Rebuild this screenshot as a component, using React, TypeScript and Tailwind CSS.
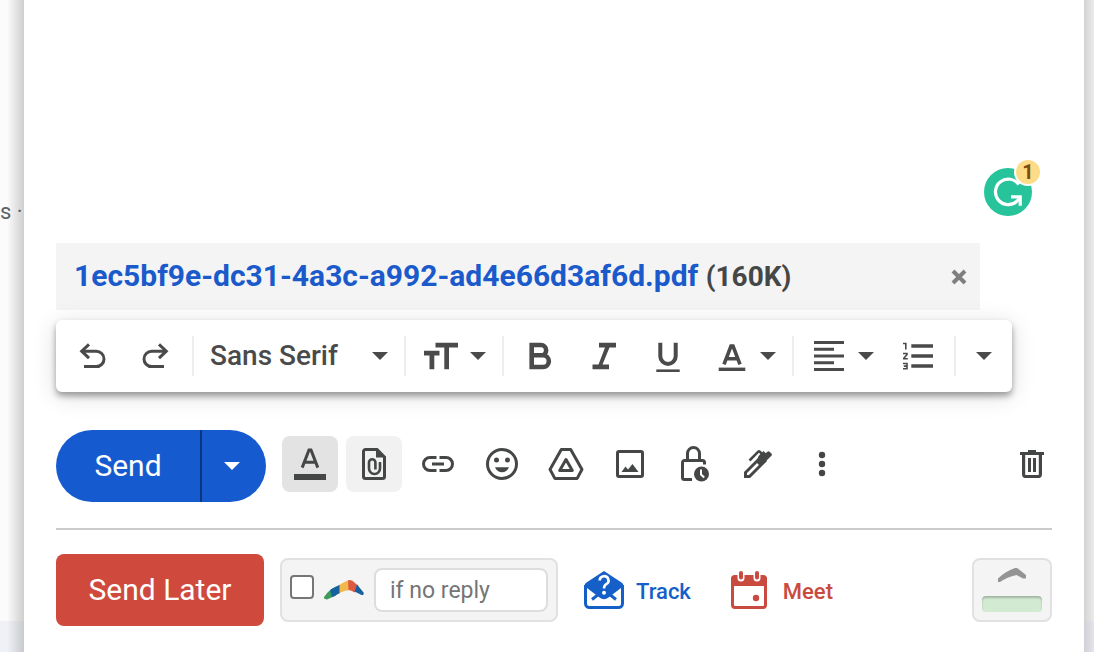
import React from 'react';

interface IconButtonProps {
  label: string;
  className?: string;
  children: React.ReactNode;
}

// Square button of the action row
const IconButton: React.FC<IconButtonProps> = ({ label, className = '', children }) => (
  <button
    type="button"
    aria-label={label}
    className={`flex h-14 w-14 shrink-0 items-center justify-center rounded-lg text-[#444746] ${className}`}
  >
    {children}
  </button>
);

const ToolButton: React.FC<IconButtonProps> = ({ label, className = 'w-16 justify-center', children }) => (
  <button type="button" aria-label={label} className={`flex h-full shrink-0 items-center ${className}`}>
    {children}
  </button>
);

const Divider = ({ className = '' }: { className?: string }) => (
  <span className={`h-10 w-0.5 shrink-0 bg-[#eceeef] ${className}`} />
);

const Caret = () => (
  <svg width="16" height="8" viewBox="0 0 16 8" fill="currentColor" aria-hidden="true">
    <path d="M0 0h16L8 8z" />
  </svg>
);

interface GlyphProps {
  w?: number;
  h?: number;
  stroke?: number;
  children: React.ReactNode;
}

const Glyph: React.FC<GlyphProps> = ({ w = 32, h = 32, stroke = 3, children }) => (
  <svg
    width={w}
    height={h}
    viewBox={`0 0 ${w} ${h}`}
    fill="none"
    stroke="currentColor"
    strokeWidth={stroke}
    className="shrink-0"
    aria-hidden="true"
  >
    {children}
  </svg>
);

const GrammarBadge = () => (
  <button type="button" aria-label="1 writing suggestion" className="relative h-12 w-12 rounded-full bg-[#27c39b]">
    <svg width="48" height="48" viewBox="0 0 48 48" fill="none" stroke="#fff" strokeWidth="3.2" aria-hidden="true">
      <path d="M34.8 16.6A12.8 12.8 0 1 0 33 33.2L36 29.5" />
      <path d="M27 28.8h9.2v9" />
    </svg>
    <span className="absolute -top-2 -right-2 flex h-6 w-6 items-center justify-center rounded-full bg-[#fddb87] text-xl leading-6 font-bold text-[#7d4c0c] ring-2 ring-white">
      1
    </span>
  </button>
);

const Attachment = () => (
  <div className="mr-10 flex h-[67px] items-center justify-between bg-[#f4f4f4] pr-3 pl-[18px]">
    <p className="text-[30px] leading-8 font-bold whitespace-nowrap text-[#444746]">
      <a href="#attachment" className="text-[#1a5acb]">
        1ec5bf9e-dc31-4a3c-a992-ad4e66d3af6d.pdf
      </a>{' '}
      <span className="text-[28px]">(160K)</span>
    </p>
    <button type="button" aria-label="Remove attachment" className="text-[#7f7f7f]">
      <Glyph w={18} h={18} stroke={4}>
        <path d="M3 3l12 12M15 3L3 15" />
      </Glyph>
    </button>
  </div>
);

const FormatToolbar = () => (
  <div
    role="toolbar"
    aria-label="Formatting options"
    className="mt-2.5 mr-2 flex h-[72px] items-center rounded-md bg-white pl-1 text-[#4a4a4a] shadow-[0_4px_6px_rgba(0,0,0,0.35),0_4px_24px_rgba(0,0,0,0.14)]"
  >
    <ToolButton label="Undo">
      <Glyph>
        <path d="M13 4.3L5.7 11.2l7.3 7" />
        <path d="M5.7 11.2h14.6a7.6 7.6 0 0 1 0 15.4H8" />
      </Glyph>
    </ToolButton>
    <ToolButton label="Redo">
      <Glyph>
        <path d="M19 4.3l7.3 6.9-7.3 7" />
        <path d="M26.3 11.2H11.7a7.6 7.6 0 0 0 0 15.4H24" />
      </Glyph>
    </ToolButton>
    <Divider className="ml-1" />
    <button type="button" className="flex h-full w-[210px] shrink-0 items-center justify-between px-4 text-[28px] leading-8 font-medium">
      Sans Serif
      <Caret />
    </button>
    <Divider />
    <ToolButton label="Size" className="w-24 justify-between pr-4 pl-[18px]">
      <Glyph w={34}>
        <path d="M11.5 2.7H34v4.8h-9v21.8h-4.7V7.5h-8.8z" fill="currentColor" stroke="none" />
        <path d="M0 10.7h15.5v4.8h-5.2v13.8H5.500V15.500H0z" fill="currentColor" stroke="none" />
      </Glyph>
      <Caret />
    </ToolButton>
    <Divider className="mr-1" />
    <ToolButton label="Bold">
      <Glyph stroke={4.6}>
        <path d="M7.700 5h9.300a5 5 0 0 1 0 10.300H7.700M7.700 15.300H19a5.800 5.800 0 0 1 0 11.700H7.700V2.700" />
      </Glyph>
    </ToolButton>
    <ToolButton label="Italic">
      <Glyph>
        <path d="M11 2.7h17v4.8h-6.5l-7 17H21v4.8H4.500v-4.800h6l6.500-17h-6z" fill="currentColor" stroke="none" />
      </Glyph>
    </ToolButton>
    <ToolButton label="Underline">
      <Glyph stroke={4}>
        <path d="M8.3 2.7v13.500a7.700 7.700 0 0 0 15.400 0V2.700" />
        <path d="M4.3 31h23.400" strokeWidth="3.2" />
      </Glyph>
    </ToolButton>
    <ToolButton label="Text color" className="w-[92px] justify-between pr-4 pl-[18px]">
      <Glyph w={28} stroke={3.6}>
        <path d="M6 24.3L13 6h2l7 18.300M9 18.800h10" />
        <path d="M.7 29.3h26.600" strokeWidth="3.4" />
      </Glyph>
      <Caret />
    </ToolButton>
    <Divider />
    <ToolButton label="Align" className="w-[92px] justify-between pr-3 pl-5">
      <Glyph w={30}>
        <path d="M0 2.5h30M0 9.300h20M0 16h30M0 22.700h20M0 29.500h30" />
      </Glyph>
      <Caret />
    </ToolButton>
    <ToolButton label="Numbered list">
      <Glyph w={30}>
        <path d="M8.3 6H30M8.300 16H30M8.300 26H30" strokeWidth="3.6" />
        <path d="M0 3.5h2.800v6M0 13.500h4v1L.8 18.300v.4h4M0 23.500h4v5.300H0M.8 26.100H4" strokeWidth="1.6" />
      </Glyph>
    </ToolButton>
    <Divider className="ml-1" />
    <ToolButton label="More formatting options" className="w-14 justify-center">
      <Caret />
    </ToolButton>
  </div>
);

const ActionRow = () => (
  <div className="flex pt-[38px] pr-6 pl-8">
    <div className="mr-4 flex h-[72px] shrink-0 overflow-hidden rounded-full bg-[#155bcf] text-white">
      <button type="button" className="w-36 text-[30px] leading-8">
        Send
      </button>
      <span className="w-0.5 bg-[#0b367f]" />
      <button type="button" aria-label="More send options" className="flex w-16 items-center pl-[22px]">
        <Caret />
      </button>
    </div>

    <div className="flex flex-1 gap-2 pt-1.5">
      <IconButton label="Formatting options" className="bg-[#e3e3e3]">
        <Glyph>
          <path d="M8.2 19.600L15 2h2l6.800 17.600M11 14.300h10" />
          <path d="M0 29h32" strokeWidth="6" />
        </Glyph>
      </IconButton>
      <IconButton label="Attach files" className="bg-[#f1f1f1]">
        <Glyph>
          <path d="M19 1.5H7.500a2 2 0 0 0-2 2v25a2 2 0 0 0 2 2h17a2 2 0 0 0 2-2V9z" />
          <path d="M18 0l10 9.500H18z" fill="currentColor" stroke="none" />
          <path d="M22 14v6.500a5.500 5.500 0 0 1-11 0v-6a3.200 3.200 0 0 1 6.400 0v7" strokeWidth="2.6" />
        </Glyph>
      </IconButton>
      <IconButton label="Insert link">
        <Glyph>
          <path d="M14.5 9.500H8a6.500 6.500 0 0 0 0 13h6.500M17.500 9.500H24a6.500 6.500 0 0 1 0 13h-6.500M10 16h12" />
        </Glyph>
      </IconButton>
      <IconButton label="Insert emoji">
        <Glyph>
          <circle cx="16" cy="16" r="14.5" />
          <g fill="currentColor" stroke="none">
            <circle cx="10.5" cy="12" r="2.5" />
            <circle cx="21.5" cy="12" r="2.5" />
            <path d="M9 19.300h14c-1.400 3.400-3.900 5-7 5s-5.600-1.600-7-5z" />
          </g>
        </Glyph>
      </IconButton>
      <IconButton label="Insert files using Drive">
        <Glyph w={36}>
          <path d="M13.300 1.600h9.400L34 21.400l-4.800 9H6.800L2 21.400z" strokeLinejoin="round" />
          <path d="M18 11.500l6.300 11H11.700z" strokeLinejoin="round" />
        </Glyph>
      </IconButton>
      <IconButton label="Insert photo">
        <Glyph w={28} h={28}>
          <rect x="1.5" y="1.5" width="25" height="25" rx="1.5" />
          <path d="M5.500 22l4-5.500 2.500 3 4.500-5.500 6 8z" fill="currentColor" stroke="none" />
        </Glyph>
      </IconButton>
      <IconButton label="Toggle confidential mode">
        <Glyph w={30} h={38}>
          <path d="M13 34.500H5.500a2 2 0 0 1-2-2v-15a2 2 0 0 1 2-2h18a2 2 0 0 1 2 2v2" />
          <path d="M8.500 15.500V8.500a6 6 0 0 1 12 0v7" />
          <circle cx="22.5" cy="29" r="7.5" fill="currentColor" stroke="none" />
          <path d="M22 24.500v5l3.200 3" stroke="#fff" strokeWidth="2" />
        </Glyph>
      </IconButton>
      <IconButton label="Insert signature">
        <Glyph w={28} h={28}>
          <path d="M1.500 26.500v-4L17 7l4 4L5.500 26.500z" strokeWidth="3" />
          <path d="M14.500 6L19.500 1l2.300 2.200 1.500-1.500q1.200-1 2.300 0l1.800 1.800q1 1.200 0 2.300L16.500 16.500l-4-4z" fill="currentColor" stroke="none" />
          <path d="M5.500 10.500l8.800-8.800q.7-.7 1.400 0l3.300 3.300" strokeWidth="2.6" />
        </Glyph>
      </IconButton>
      <IconButton label="More options">
        <Glyph>
          <g fill="currentColor" stroke="none">
            <circle cx="16" cy="7" r="3.2" />
            <circle cx="16" cy="16" r="3.2" />
            <circle cx="16" cy="25" r="3.2" />
          </g>
        </Glyph>
      </IconButton>
      <IconButton label="Discard draft" className="ml-auto">
        <Glyph w={24} h={28}>
          <path d="M0 3.500h24" />
          <path d="M8 1h8" strokeWidth="2" />
          <path d="M3.600 4v20.500a2 2 0 0 0 2 2h12.800a2 2 0 0 0 2-2V4" strokeWidth="3.2" />
          <path d="M9.500 8v14M14.500 8v14" />
        </Glyph>
      </IconButton>
    </div>
  </div>
);

const Boomerang = () => (
  <svg width="40" height="20" viewBox="0 0 40 20" aria-hidden="true">
    <path d="M0 17Q3.500 11.500 9 8l3 7.500L3 19.500Q-.5 19.500 0 17z" fill="#3f9b5a" />
    <path d="M6 10Q10 7 16 4.700V13L8 17.300z" fill="#15609f" />
    <path d="M15.500 5Q19 2.500 24.500 0l1 10q-5 .5-10 3z" fill="#f3b84b" />
    <path d="M24 .5Q27.500-1 31 3l3.500 3-4 6.500Q27.500 10 24.500 10z" fill="#dd5a41" />
    <path d="M33 4.500l6.500 8q1 3-2 2.500L30.500 11.500z" fill="#15609f" />
  </svg>
);

const BoomerangRow = () => (
  <div className="flex items-center px-8 pt-6 pb-[26px]">
    <button type="button" className="h-[72px] w-52 shrink-0 rounded-lg bg-[#cf4a3c] text-[30px] leading-8 text-white">
      Send Later
    </button>

    <div className="ml-4 flex h-16 shrink-0 items-center rounded-lg border-2 border-[#e1e1e1] bg-[#f4f4f4] px-2">
      <label className="flex items-center gap-2.5">
        <input
          type="checkbox"
          aria-label="Boomerang this message"
          className="mb-1.5 h-6 w-6 appearance-none rounded border-2 border-[#767676] bg-white"
        />
        <Boomerang />
      </label>
      <input
        type="text"
        aria-label="Boomerang condition"
        placeholder="if no reply"
        className="ml-2.5 h-11 w-[174px] rounded-lg border-2 border-[#dddddd] bg-white px-3.5 text-[23px] leading-8 placeholder:text-[#757575]"
      />
    </div>

    <a href="#track" className="ml-[26px] flex shrink-0 items-center gap-3 text-[22px] leading-8 font-medium text-[#155fc8]">
      <Glyph w={40} h={38}>
        <path d="M20 0l17.500 11.500q2.500 1.700 1.500 4L24.500 26.500q-4.500 3.500-9 0L1 15.500q-1-2.300 1.500-4z" fill="currentColor" stroke="none" />
        <path d="M1.500 14v18.500a4 4 0 0 0 4 4h29a4 4 0 0 0 4-4V14" />
        <path d="M8 28.500l7.500-6M32 28.500l-7.500-6" />
        <path d="M15.700 9.500a4.400 4.300 0 1 1 6.600 3.700Q20 14.500 20 17.500" stroke="#fff" strokeWidth="2.6" />
        <circle cx="20" cy="21.8" r="2" fill="#fff" stroke="none" />
      </Glyph>
      <span className="pt-1">Track</span>
    </a>
    <a href="#meet" className="ml-10 flex shrink-0 items-center gap-4 text-[22px] leading-8 font-medium text-[#c94a3e]">
      <Glyph w={36} h={38}>
        <path d="M4 4h28a4 4 0 0 1 4 4v7H0V8a4 4 0 0 1 4-4z" fill="currentColor" stroke="none" />
        <rect x="1.5" y="6" width="33" height="30.5" rx="2.5" />
        <path d="M10 2v5M26 2v5" stroke="#fff" strokeWidth="7" strokeLinecap="round" />
        <path d="M10 2v4.500M26 2v4.500" strokeWidth="4" strokeLinecap="round" />
        <circle cx="25" cy="27" r="3.2" fill="currentColor" stroke="none" />
      </Glyph>
      <span className="pt-1">Meet</span>
    </a>

    <button
      type="button"
      aria-label="Boomerang status"
      className="ml-auto flex h-16 w-20 shrink-0 flex-col items-center justify-between rounded-lg border-2 border-[#e1e1e1] bg-[#f4f4f4] p-2"
    >
      <svg width="28" height="14" viewBox="0 0 28 14" fill="#949494" aria-hidden="true">
        <path d="M0 10.500Q7 3.500 17 0q2-.5 3.500 1L28 7v3.500h-3L18.500 7Q9 9 2 14H0z" />
      </svg>
      <span className="h-4 w-full rounded bg-[#d2ead1] shadow-[inset_0_2px_2px_rgba(0,0,0,0.22)]" />
    </button>
  </div>
);

const App: React.FC = () => (
  <div className="flex min-h-screen bg-[#e9e9e9] font-['Roboto',sans-serif]">
    {/* Edge of the inbox behind the compose window */}
    <aside className="flex w-6 shrink-0 flex-col bg-linear-to-r from-[#fbfbfb] from-30% to-[#cfcfcf]">
      <p className="h-[621px] pt-[196px] text-[22px] leading-8 whitespace-nowrap text-[#5f6368]">s ·</p>
      <div className="flex-1 bg-linear-to-r from-[#eff1f6] from-30% to-[#c9cace]" />
    </aside>

    <main className="flex min-w-0 flex-1 flex-col bg-white">
      <div className="flex flex-1 items-end justify-end pr-[52px] pb-[27px]">
        <GrammarBadge />
      </div>
      <div className="pr-16 pl-8">
        <Attachment />
        <FormatToolbar />
      </div>
      <ActionRow />
      <hr className="mx-8 mt-[26px] border-t-2 border-[#cccccc]" />
      <BoomerangRow />
    </main>

    <aside className="flex w-2.5 shrink-0 flex-col">
      <div className="h-[621px] bg-linear-to-r from-[#d3d3d3] to-[#ebebeb]" />
      <div className="flex-1 bg-linear-to-r from-[#cfd1d6] to-[#e3e5ea]" />
    </aside>
  </div>
);

export default App;
